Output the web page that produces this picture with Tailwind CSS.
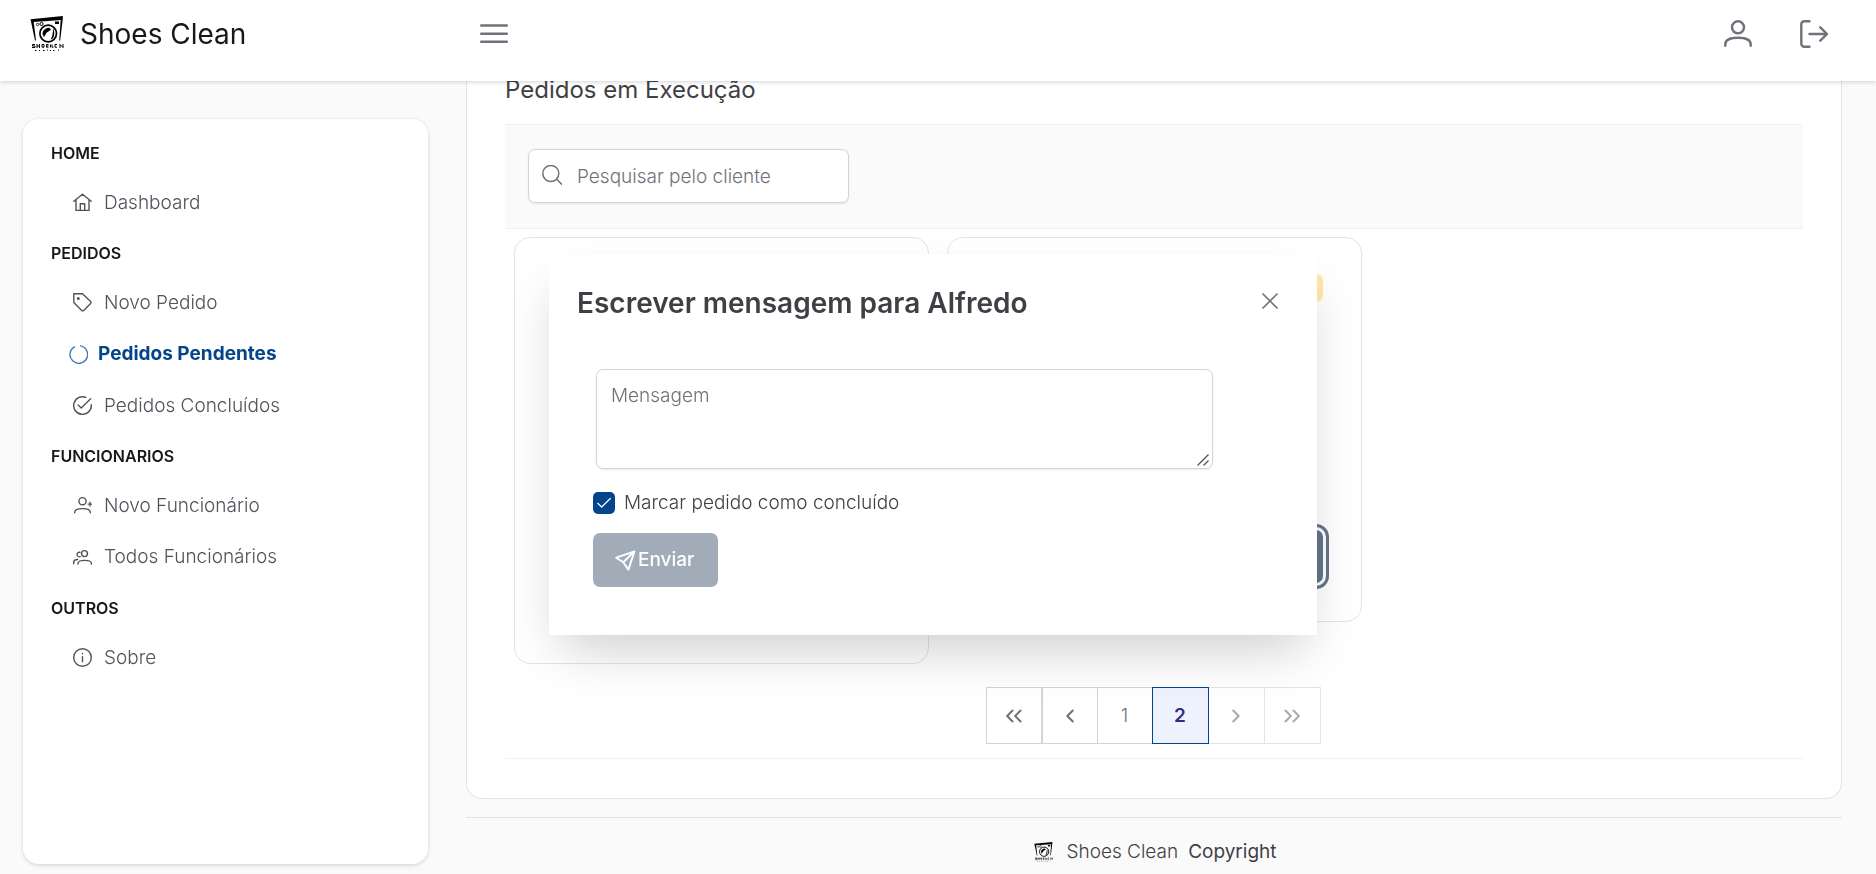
<!DOCTYPE html>
<html lang="pt">
<head>
<meta charset="utf-8">
<meta name="viewport" content="width=device-width, initial-scale=1">
<title>Shoes Clean</title>
<script src="https://cdn.jsdelivr.net/npm/@tailwindcss/browser@4"></script>
</head>
<body class="h-screen overflow-hidden bg-[#fafafa] font-['Inter',sans-serif] text-[19px] leading-7 font-light text-[#3f3f46]">
<svg class="hidden" aria-hidden="true">
  <symbol id="logo" viewBox="0 0 34 36">
    <path d="M.5 3.200 33 0 32 4 3.500 6Z" fill="#000"/>
    <path d="M.5 3.200 3.600 5 6 24.500 5 24.500ZM33 1 30.600 5 29.200 24.500 30.200 24.500Z" fill="#000"/>
    <path d="M25 5.500h4v2.500h-4z" fill="#000"/>
    <circle cx="7.500" cy="8.500" r="1.200" fill="none" stroke="#000" stroke-width=".8"/><circle cx="11.500" cy="8" r="1.600" fill="none" stroke="#000"/>
    <circle cx="18.200" cy="17.500" r="8.300" fill="#fff" stroke="#000" stroke-width="1.700"/>
    <path d="M12.500 18c0-4 3.500-6.500 7-6.300l1.500 2-4.500 3-2.500 4.500ZM23 12.500c1.800 2 1.800 8-.5 10.300l-2 .7c2-3 2.500-6.500 2.500-11Z" fill="#000"/>
    <path d="M5 28.500H2.500v1.500H5v1.500H2M7 28v4M9.500 28v4M7 30h2.500M12 28.500h2v2.700h-2zM18.500 28.500h-2v2.700h2M16.500 30h2M20.500 28.500v3M27 28.500h-2v2.700h2M22 28.500v2.700h1.500M30 28v4M33 28v4M30.500 29l2 2M5 34.500h1.500M9 34.500h1M13 34.500h1.500M17 34h1M20 34.500h1M23 34.500h1.500M28 34h1" stroke="#000" stroke-width="1" fill="none"/>
  </symbol>
</svg>

<header class="fixed inset-x-0 top-0 z-20 flex h-[81px] items-start bg-white pr-[34px] pl-[30px] pt-[10px] shadow-[0_1px_4px_rgba(0,0,0,0.14),0_3px_5px_rgba(0,0,0,0.03)]">
  <div class="flex w-[436px] items-center">
    <a href="#" class="flex h-12 items-center gap-4 text-[28px] font-normal text-[#18181b]">
      <svg class="h-[36px] w-[34px]"><use href="#logo"/></svg>
      <span>Shoes Clean</span>
    </a>
  </div>
  <button type="button" aria-label="Menu" class="flex h-12 w-14 items-center justify-center text-[#71717a]">
    <svg class="size-7" viewBox="0 0 28 28" fill="none" stroke="currentColor" stroke-width="2.400" stroke-linecap="round"><path d="M1.200 5.500h25.600M1.200 13.700h25.600M1.200 21.800h25.600"/></svg>
  </button>
  <div class="ml-auto flex gap-5 text-[#71717a]">
    <button type="button" aria-label="Perfil" class="flex h-12 w-14 items-center justify-center">
      <svg class="size-7" viewBox="0 0 28 28" fill="none" stroke="currentColor" stroke-width="2.400" stroke-linecap="round"><circle cx="14" cy="7.300" r="6"/><path d="M1.300 25.800v-1.300c0-4.500 4.500-6.700 12.700-6.700s12.700 2.200 12.700 6.700v1.300"/></svg>
    </button>
    <button type="button" aria-label="Sair" class="flex h-12 w-14 items-center justify-center">
      <svg class="size-7" viewBox="0 0 28 28" fill="none" stroke="currentColor" stroke-width="2.400" stroke-linecap="round" stroke-linejoin="round"><path d="M9.500 1.200H4.300a3 3 0 0 0-3 3v19.600a3 3 0 0 0 3 3h5.200M9.500 14H27M20.300 7.300 27 14l-6.700 6.700"/></svg>
    </button>
  </div>
</header>

<aside class="fixed top-[119px] bottom-[10px] left-[23px] w-[405px] rounded-2xl bg-white px-7 pt-[9px] text-[#52525b] shadow-[0_1px_4px_rgba(0,0,0,0.14),0_3px_5px_rgba(0,0,0,0.03)]">
  <nav>
    <h2 class="flex h-[49px] items-center text-base font-semibold text-[#18181b]">HOME</h2>
    <ul>
      <li><a href="#" class="flex h-[51px] items-center gap-3 pl-[22px]">
        <svg class="size-[19px]" viewBox="0 0 19 19" fill="none" stroke="currentColor" stroke-width="1.400" stroke-linecap="round" stroke-linejoin="round"><path d="M.8 8.300 9.500 1.200l8.700 7.100M3 6.800v10.600h13V6.800M7.300 17.400v-6.600h4.400v6.600"/></svg>
        Dashboard</a></li>
    </ul>
    <h2 class="flex h-[49px] items-center text-base font-semibold text-[#18181b]">PEDIDOS</h2>
    <ul>
      <li><a href="#" class="flex h-[51px] items-center gap-3 pl-[22px]">
        <svg class="size-[19px]" viewBox="0 0 19 19" fill="none" stroke="currentColor" stroke-width="1.400" stroke-linejoin="round"><path d="M.8.800h8.700l8.100 7.700a1.400 1.400 0 0 1 0 2l-6.900 7a1.400 1.400 0 0 1-2 0L.8 9.600Z"/><circle cx="5.300" cy="5.500" r=".8" fill="currentColor"/></svg>
        Novo Pedido</a></li>
      <li><a href="#" aria-current="page" class="flex h-[52px] items-center gap-[10px] pl-[18px] font-bold text-[#04448b]">
        <svg class="size-[19px]" viewBox="0 0 19 19" fill="none" stroke="#4479b4" stroke-width="1.400" stroke-linecap="round"><path d="M11.600.9a8.800 8.800 0 1 1-6.200 1"/></svg>
        Pedidos Pendentes</a></li>
      <li><a href="#" class="flex h-[51px] items-center gap-3 pl-[22px]">
        <svg class="size-[19px]" viewBox="0 0 19 19" fill="none" stroke="currentColor" stroke-width="1.400" stroke-linecap="round" stroke-linejoin="round"><path d="M18.300 8.700v.8A8.800 8.800 0 1 1 12.800 1.400M17.600 2.800l-9.300 9.300-3.200-3.200"/></svg>
        Pedidos Concluídos</a></li>
    </ul>
    <h2 class="flex h-[49px] items-center text-base font-semibold text-[#18181b]">FUNCIONARIOS</h2>
    <ul>
      <li><a href="#" class="flex h-[51px] items-center gap-3 pl-[22px]">
        <svg class="size-[19px]" viewBox="0 0 19 19" fill="none" stroke="currentColor" stroke-width="1.400" stroke-linecap="round"><circle cx="9.500" cy="5.200" r="3.600"/><path d="M1.700 16.800v-.6c0-2.400 2.800-3.600 7.800-3.600s7.800 1.200 7.800 3.600v.6M17 6.200v3.800M15.100 8.100h3.600"/></svg>
        Novo Funcionário</a></li>
      <li><a href="#" class="flex h-[52px] items-center gap-3 pl-[22px]">
        <svg class="size-[19px]" viewBox="0 0 19 19" fill="none" stroke="currentColor" stroke-width="1.400" stroke-linecap="round"><circle cx="11.500" cy="5.600" r="3"/><path d="M5 16v-.5c0-2 2.300-3.100 6.700-3.100s6.700 1.100 6.700 3.100v.5M6.800 4.300a2.300 2.300 0 1 0 .4 4.400M.7 15.800v-1.300c0-2 1.400-3 4-3"/></svg>
        Todos Funcionários</a></li>
    </ul>
    <h2 class="flex h-[49px] items-center text-base font-semibold text-[#18181b]">OUTROS</h2>
    <ul>
      <li><a href="#" class="flex h-[51px] items-center gap-3 pl-[22px]">
        <svg class="size-[19px]" viewBox="0 0 19 19" fill="none" stroke="currentColor" stroke-width="1.400" stroke-linecap="round"><circle cx="9.500" cy="9.500" r="8.800"/><path d="M9.500 8.700v5M9.500 5.500v.2"/></svg>
        Sobre</a></li>
    </ul>
  </nav>
</aside>

<div class="ml-[466px] pr-[34px]">
  <main class="rounded-b-2xl border border-t-0 border-[#e4e4e7] bg-white px-[38px] pt-[70px] pb-[39px]">
    <h1 class="text-2xl leading-10 font-normal">Pedidos em Execução</h1>
    <div class="mt-[14px] flex h-[105px] items-start border-y border-[#f1f1f3] bg-[#fafafa] px-[23px] pt-6">
      <div class="relative w-[321px]">
        <svg class="absolute top-4 left-[14px] size-5 text-[#71717a]" viewBox="0 0 20 20" fill="none" stroke="currentColor" stroke-width="1.500" stroke-linecap="round"><circle cx="8.800" cy="8.500" r="8"/><path d="m14.600 14.300 5 4.800"/></svg>
        <input type="text" aria-label="Pesquisar pelo cliente" placeholder="Pesquisar pelo cliente" class="block h-[54px] w-full rounded-[7px] border border-[#d4d4d8] bg-white pr-4 pl-12 font-light shadow-[0_1px_2px_rgba(18,18,23,0.08)] placeholder:text-[#71717a]">
      </div>
    </div>
    <div class="flex items-start gap-[18px] px-[9px] pt-2">
      <section class="h-[427px] w-[32%] max-w-[415px] shrink-0 basis-[415px] rounded-2xl border border-[#e4e4e7]"></section>
      <section class="flex h-[385px] w-[32%] max-w-[415px] basis-[415px] flex-col items-end justify-between rounded-2xl border border-[#e4e4e7] px-[38px] pt-9 pb-[38px]">
        <span class="h-7 w-24 rounded-[7px] bg-[#ffeaa8]"></span>
        <button type="button" aria-label="Enviar mensagem" class="h-[53px] w-14 rounded-[7px] bg-[#64748b] shadow-[0_0_0_3px_#fff,0_0_0_6px_#64748b]"></button>
      </section>
    </div>
    <nav aria-label="Paginação" class="flex justify-center border-b border-[#f1f1f3] pt-[23px] pr-[2px] pb-[14px] text-[#71717a]">
      <button type="button" aria-label="Primeira página" class="flex h-[57px] w-14 items-center justify-center border border-[#d4d4d8]"><svg class="size-4" viewBox="0 0 16 16" fill="none" stroke="currentColor" stroke-width="2" stroke-linecap="round" stroke-linejoin="round"><path d="M6.500 2.500 1.200 8l5.300 5.500M14.500 2.500 9.200 8l5.300 5.500"/></svg></button>
      <button type="button" aria-label="Página anterior" class="flex h-[57px] w-14 items-center justify-center border border-[#d4d4d8]"><svg class="size-4" viewBox="0 0 16 16" fill="none" stroke="currentColor" stroke-width="2" stroke-linecap="round" stroke-linejoin="round"><path d="M10.800 2.500 5.300 8l5.500 5.500"/></svg></button>
      <button type="button" class="h-[57px] w-[54px] border-y border-[#d4d4d8] font-light">1</button>
      <button type="button" aria-current="page" class="h-[57px] w-[57px] border border-[#04448b] bg-[#eef2ff] font-semibold text-[#312e81]">2</button>
      <button type="button" aria-label="Próxima página" disabled class="flex h-[57px] w-14 items-center justify-center border border-l-0 border-[#e4e4e7] text-[#aaaab0]"><svg class="size-4" viewBox="0 0 16 16" fill="none" stroke="currentColor" stroke-width="2" stroke-linecap="round" stroke-linejoin="round"><path d="M5.200 2.500 10.700 8l-5.500 5.500"/></svg></button>
      <button type="button" aria-label="Última página" disabled class="flex h-[57px] w-14 items-center justify-center border border-l-0 border-[#e4e4e7] text-[#aaaab0]"><svg class="size-4" viewBox="0 0 16 16" fill="none" stroke="currentColor" stroke-width="2" stroke-linecap="round" stroke-linejoin="round"><path d="M1.500 2.500 6.800 8l-5.300 5.500M9.500 2.500l5.300 5.500-5.300 5.500"/></svg></button>
    </nav>
  </main>
  <footer class="mt-[18px] flex items-center justify-center gap-[10px] border-t border-[#e4e4e7] pt-5 pl-[3px]">
    <svg class="mr-[3px] h-5 w-[19px]"><use href="#logo"/></svg>
    <span>Shoes Clean</span>
    <span class="font-normal">Copyright</span>
  </footer>
</div>

<div role="dialog" aria-labelledby="dialog-title" class="fixed top-[254px] left-1/2 ml-[-389px] w-[768px] bg-white px-7 pb-12 shadow-[0_25px_50px_-12px_rgba(0,0,0,0.2)]">
  <div class="flex items-start justify-between pt-7">
    <h2 id="dialog-title" class="pt-px text-[28px] leading-10 font-semibold">Escrever mensagem para Alfredo</h2>
    <button type="button" aria-label="Fechar" class="flex size-[38px] items-center justify-center text-[#71717a]">
      <svg class="size-4" viewBox="0 0 16 16" fill="none" stroke="currentColor" stroke-width="1.700" stroke-linecap="round"><path d="m1 1 14 14M15 1 1 15"/></svg>
    </button>
  </div>
  <form class="flex flex-col items-start pt-[46px] pl-4">
    <div class="relative ml-[3px]">
      <textarea aria-label="Mensagem" placeholder="Mensagem" class="block h-[100px] w-[617px] resize-none rounded-[7px] border border-[#d4d4d8] px-[14px] py-3 font-light shadow-[0_1px_2px_rgba(18,18,23,0.08)] placeholder:text-[#71717a]"></textarea>
      <svg class="pointer-events-none absolute right-1 bottom-[3px] size-3" viewBox="0 0 12 12" fill="none" stroke="#52525b" stroke-width="1.300"><path d="M.5 11.500 11.500.500M6.500 11.500l5-5"/></svg>
    </div>
    <label class="mt-5 flex items-center gap-[9px]">
      <span class="relative size-[22px]">
        <input type="checkbox" checked class="block size-[22px] appearance-none rounded-[5px] bg-[#04448b]">
        <svg class="pointer-events-none absolute top-1 left-1 size-[14px]" viewBox="0 0 14 14" fill="none" stroke="#fff" stroke-width="1.200" stroke-linecap="round" stroke-linejoin="round"><path d="m.7 7.300 4 3.700 8.600-8.500"/></svg>
      </span>
      <span>Marcar pedido como concluído</span>
    </label>
    <button type="submit" disabled class="mt-4 flex h-[54px] items-center gap-[2px] rounded-[7px] bg-[#a2acb9] pr-6 pl-[22px] font-medium text-white">
      <svg class="size-[21px]" viewBox="0 0 21 21" fill="none" stroke="currentColor" stroke-width="1.900" stroke-linejoin="round"><path d="M19.500 1.300 1.200 7.700l7 4.500 5.200 7.400ZM19.500 1.300 8.200 12.200"/></svg>
      <span>Enviar</span>
    </button>
  </form>
</div>
</body>
</html>
